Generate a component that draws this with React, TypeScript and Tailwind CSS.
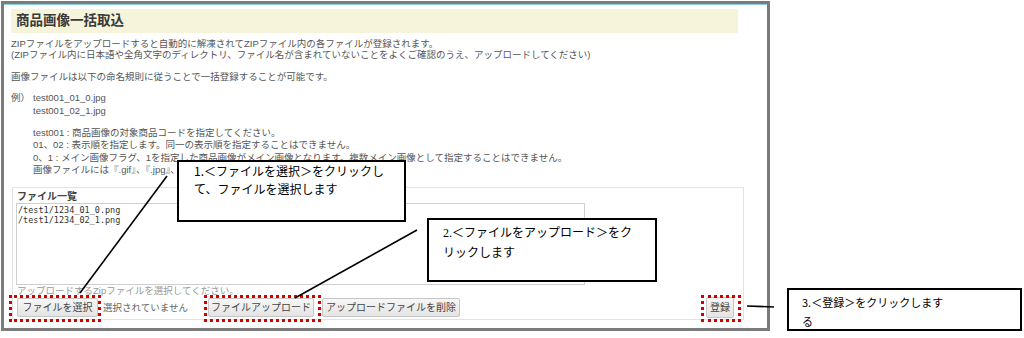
const body = "font-['Liberation_Sans','Noto_Sans_CJK_JP',sans-serif]";
const note = "font-['Noto_Sans_CJK_JP',sans-serif]";
const mincho = "font-['Liberation_Serif','Noto_Sans_CJK_JP',serif]";

function GrayButton({ label, className = "" }: { label: string; className?: string }) {
  return (
    <div
      className={`h-[19px] px-[6px] flex items-center justify-center rounded-[2px] border border-[#c6c6c6] bg-gradient-to-b from-[#f7f7f7] to-[#e4e4e4] text-[10px] text-[#444] whitespace-nowrap ${className}`}
    >
      {label}
    </div>
  );
}

function Marked({ children, box }: { children: React.ReactNode; box: string }) {
  return (
    <div className="relative">
      {children}
      <div className={`absolute border-[3px] border-dotted border-[#d40000] ${box}`} />
    </div>
  );
}

function Callout({ className, children }: { className: string; children: React.ReactNode }) {
  return (
    <div className={`absolute bg-white border-2 border-black text-black ${className}`}>{children}</div>
  );
}

export default function App() {
  return (
    <div className={`relative w-[1024px] h-[338px] overflow-hidden bg-white ${body}`}>
      {/* screenshot frame */}
      <div className="ml-px mt-px w-[769px] h-[330px] border-[3px] border-[#7b7b7b]">
        <div className="h-full border-t border-[#8fd0ea] pl-[7px]">
          <div className="mt-[4px] h-[24px] w-[727px] bg-[#f6f5dc] pl-[5px] text-[13.5px] font-bold leading-[24px] text-[#3a3a3a]">
            商品画像一括取込
          </div>

          <div className="text-[9.5px] text-[#555]">
            <div className="mt-[4.5px] leading-[11px]">
              <p>ZIPファイルをアップロードすると自動的に解凍されてZIPファイル内の各ファイルが登録されます。</p>
              <p>(ZIPファイル内に日本語や全角文字のディレクトリ、ファイル名が含まれていないことをよくご確認のうえ、アップロードしてください)</p>
            </div>
            <p className="mt-[11px] leading-[11px]">画像ファイルは以下の命名規則に従うことで一括登録することが可能です。</p>
            <div className="mt-[10.5px] flex leading-[12.5px]">
              <span className="w-[22px]">例）</span>
              <div>
                <p>test001_01_0.jpg</p>
                <p>test001_02_1.jpg</p>
              </div>
            </div>
            <div className="mt-[10px] pl-[22px] leading-[12.3px]">
              <p>test001 : 商品画像の対象商品コードを指定してください。</p>
              <p>01、02 : 表示順を指定します。同一の表示順を指定することはできません。</p>
              <p>0、1 : メイン画像フラグ、1を指定した商品画像がメイン画像となります。複数メイン画像として指定することはできません。</p>
              <p>画像ファイルには『.gif』、『.jpg』、『.png』が使用できます。</p>
            </div>
          </div>

          {/* file list */}
          <div className="mt-[11px] ml-px w-[732px] h-[133px] border border-[#e2e2e2] pl-[3px] pr-[4px]">
            <p className="mt-[2.5px] pl-px text-[10px] font-bold leading-[11px] text-[#444]">ファイル一覧</p>
            <div className="mt-[1.5px] w-[569px] h-[82px] border border-[#cfcfcf] pl-[1px] pt-px font-['DejaVu_Sans_Mono',monospace] text-[8.5px] leading-[10px] text-[#333]">
              <p>/test1/1234_01_0.png</p>
              <p>/test1/1234_02_1.png</p>
            </div>
            <p className="pl-px h-[11px] text-[9.5px] leading-[11px] text-[#999]">
              アップロードするZipファイルを選択してください。
            </p>
            <div className="mt-px flex items-center">
              <Marked box="-left-[7px] -right-[3px] -top-[3px] -bottom-[5px]">
                <GrayButton label="ファイルを選択" className="ml-px w-[81px]" />
              </Marked>
              <span className="ml-[5px] text-[9.5px] text-[#666]">選択されていません</span>
              <div className="ml-[20px]">
                <Marked box="-left-[4px] -right-[7px] -top-[3px] -bottom-[5px]">
                  <GrayButton label="ファイルアップロード" className="w-[106px]" />
                </Marked>
              </div>
              <GrayButton label="アップロードファイルを削除" className="ml-[8px] w-[138px]" />
              <div className="ml-auto mr-[5px]">
                <Marked box="-left-[5px] -right-[7px] -top-[2px] -bottom-[4px]">
                  <GrayButton label="登録" className="w-[28px] h-[21px] px-0" />
                </Marked>
              </div>
            </div>
          </div>
        </div>
      </div>

      {/* connector lines */}
      <svg className="absolute left-0 top-0 pointer-events-none" width="1024" height="338">
        <line x1="167" y1="176" x2="80" y2="293" stroke="#000" strokeWidth="1.6" />
        <line x1="417" y1="230" x2="295" y2="298" stroke="#000" strokeWidth="1.6" />
        <line x1="747" y1="306" x2="774" y2="307" stroke="#000" strokeWidth="1.6" />
      </svg>

      <Callout className={`left-[177px] top-[160px] w-[229px] h-[62px] pl-[15px] text-[12px] leading-[18px] ${note}`}>
        <p>1.＜ファイルを選択＞をクリックし</p>
        <p>て、ファイルを選択します</p>
      </Callout>
      <Callout className={`left-[427px] top-[218px] w-[230px] h-[64px] pl-[14px] pt-[3px] text-[12px] leading-[20px] ${mincho}`}>
        <p>2.＜ファイルをアップロード＞をク</p>
        <p>リックします</p>
      </Callout>
      <Callout className={`left-[787px] top-[288px] w-[235px] h-[43px] pl-[13px] pt-[3px] text-[11px] leading-[19px] ${note}`}>
        <p>3.＜登録＞をクリックします</p>
        <p>る</p>
      </Callout>
    </div>
  );
}
